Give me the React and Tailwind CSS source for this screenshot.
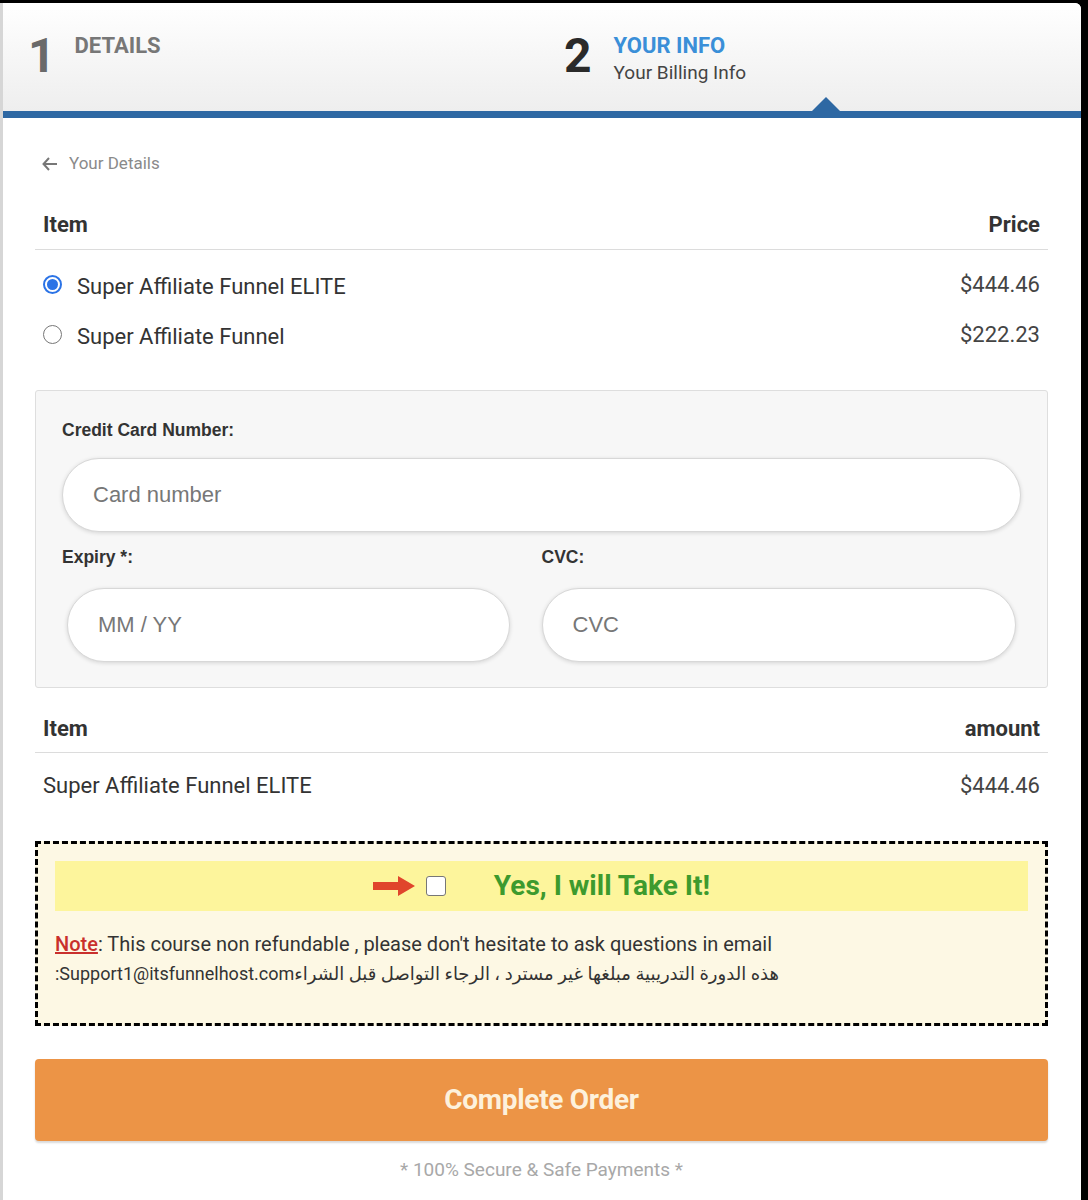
import React, { useState } from 'react';

const font = { fontFamily: 'Roboto, "Noto Sans", "DejaVu Sans", sans-serif' };

const Radio = ({ checked, onClick }) => (
  <button
    type="button"
    onClick={onClick}
    className={`w-[19px] h-[19px] rounded-full flex items-center justify-center shrink-0 ${
      checked ? 'border-[2px] border-[#2b73e6] bg-white' : 'border border-[#777] bg-white'
    }`}
  >
    {checked && <span className="w-[11px] h-[11px] rounded-full bg-[#2b73e6]" />}
  </button>
);

const Arrow = () => (
  <svg width="43" height="22" viewBox="0 0 43 22">
    <path d="M0 7 H25 V1 L42 11 L25 21 V15 H0 Z" fill="#e0452c" />
  </svg>
);

const inputCls =
  'h-[74px] rounded-full bg-white border border-[#d8d8d8] shadow-[0_1px_4px_rgba(0,0,0,0.14)] px-[30px] text-[22px] text-[#333] placeholder:text-[#777] outline-none';

const App = () => {
  const [plan, setPlan] = useState('elite');
  const [take, setTake] = useState(false);

  const plans = [
    { id: 'elite', name: 'Super Affiliate Funnel ELITE', price: '$444.46' },
    { id: 'basic', name: 'Super Affiliate Funnel', price: '$222.23' },
  ];
  const current = plans.find((p) => p.id === plan);

  return (
    <div className="min-h-screen bg-black pt-[3px] pr-[7px]" style={font}>
      <div className="bg-white border-l-[3px] border-[#d6d6d6] rounded-tr-[6px] min-h-[1197px] overflow-hidden">
        {/* steps header */}
        <div className="relative h-[108px] bg-gradient-to-b from-white to-[#eeeeee] grid grid-cols-2">
          <div className="flex items-start pl-[25px] pt-[29px] gap-[19px]">
            <span className="text-[48px] leading-none font-bold text-[#6a6a6a]">1</span>
            <div className="text-[22px] font-bold text-[#777] leading-none pt-[3px]">DETAILS</div>
          </div>
          <div className="flex items-start pl-[22px] pt-[29px] gap-[22px]">
            <span className="text-[48px] leading-none font-bold text-[#2a2a2a]">2</span>
            <div className="pt-[3px]">
              <div className="text-[22px] font-bold text-[#3a8fd8] leading-none">YOUR INFO</div>
              <div className="text-[19px] text-[#444] leading-none mt-[6px]">Your Billing Info</div>
            </div>
          </div>
          <div className="absolute left-[809px] bottom-0 w-0 h-0 border-l-[14px] border-r-[14px] border-b-[14px] border-l-transparent border-r-transparent border-b-[#2e68a3]" />
        </div>
        <div className="h-[7px] bg-[#2e68a3]" />

        <div className="pl-[32px] pr-[33px]">
          <div className="flex items-center gap-[11px] pl-[7px] pt-[33px] text-[17px] text-[#8a8a8a]">
            <svg width="16" height="14" viewBox="0 0 16 14" fill="none" stroke="#777" strokeWidth="2">
              <path d="M15 7 H2 M7 1 L1.5 7 L7 13" />
            </svg>
            <span>Your Details</span>
          </div>

          {/* plans table */}
          <div className="mt-[31px] flex justify-between px-[8px] pb-[8px] border-b border-[#dcdcdc] text-[22px] font-bold text-[#333]">
            <span>Item</span>
            <span>Price</span>
          </div>
          <div className="pt-[10px]">
            {plans.map((p) => (
              <div key={p.id} className="h-[50px] flex items-center justify-between px-[8px]">
                <label className="flex items-center gap-[15px] cursor-pointer" onClick={() => setPlan(p.id)}>
                  <Radio checked={plan === p.id} />
                  <span className="text-[22px] text-[#333] mt-[4px]">{p.name}</span>
                </label>
                <span className="text-[22px] text-[#444]">{p.price}</span>
              </div>
            ))}
          </div>

          {/* card box */}
          <div
            className="mt-[30px] bg-[#f7f7f7] border border-[#dedede] rounded-[3px] px-[26px] pt-[31px] pb-[25px]"
            style={{ fontFamily: '"Liberation Sans", Arial, sans-serif' }}
          >
            <div className="text-[17.5px] font-bold text-[#333] leading-none">Credit Card Number:</div>
            <input placeholder="Card number" className={`mt-[19px] w-full ${inputCls}`} />
            <div className="grid grid-cols-2 mt-[17px]">
              <div>
                <div className="text-[17.5px] font-bold text-[#333] leading-none">Expiry *:</div>
                <input placeholder="MM / YY" className={`mt-[21px] ml-[5px] w-[443px] ${inputCls}`} />
              </div>
              <div>
                <div className="text-[17.5px] font-bold text-[#333] leading-none">CVC:</div>
                <input placeholder="CVC" className={`mt-[21px] w-[474px] ${inputCls}`} />
              </div>
            </div>
          </div>

          {/* summary table */}
          <div className="mt-[24px] flex justify-between px-[8px] pb-[7px] border-b border-[#dcdcdc] text-[22px] font-bold text-[#333]">
            <span>Item</span>
            <span>amount</span>
          </div>
          <div className="h-[66px] flex items-center justify-between px-[8px] text-[22px] text-[#333]">
            <span>{current.name}</span>
            <span className="text-[#444]">{current.price}</span>
          </div>

          {/* upsell box */}
          <div className="mt-[22px] border-[3px] border-dashed border-black bg-[#fdf8e4] px-[17px] pt-[17px] pb-[34px]">
            <div className="h-[50px] bg-[#fdf59c] flex items-center justify-center">
              <Arrow />
              <button
                type="button"
                onClick={() => setTake(!take)}
                className="ml-[10px] w-[20px] h-[20px] rounded-[3px] border border-[#777] bg-white flex items-center justify-center"
              >
                {take && <span className="text-[14px] leading-none text-[#333]">✓</span>}
              </button>
              <span className="ml-[48px] text-[28px] font-bold text-[#3d9a2e]">Yes, I will Take It!</span>
            </div>
            <p className="mt-[18px] text-[20px] text-[#333] leading-[30px]">
              <span className="text-[#c9302c] font-medium underline">Note</span>: This course non refundable , please don't hesitate to ask questions in email
            </p>
            <p dir="rtl" className="w-fit text-[18px] text-[#333] leading-[30px]">
              هذه الدورة التدريبية مبلغها غير مسترد ، الرجاء التواصل قبل الشراءSupport1@itsfunnelhost.com:
            </p>
          </div>

          {/* submit */}
          <button
            type="button"
            className="mt-[33px] w-full h-[82px] rounded-[4px] bg-[#ec9446] shadow-[0_2px_2px_rgba(0,0,0,0.15)] text-[28px] font-bold text-[#fdf1dc] tracking-[-0.3px]"
          >
            Complete Order
          </button>
          <div className="pt-[15px] pb-[10px] text-center text-[19px] text-[#a8a8a8]">* 100% Secure &amp; Safe Payments *</div>
        </div>
      </div>
    </div>
  );
};

export default App;
